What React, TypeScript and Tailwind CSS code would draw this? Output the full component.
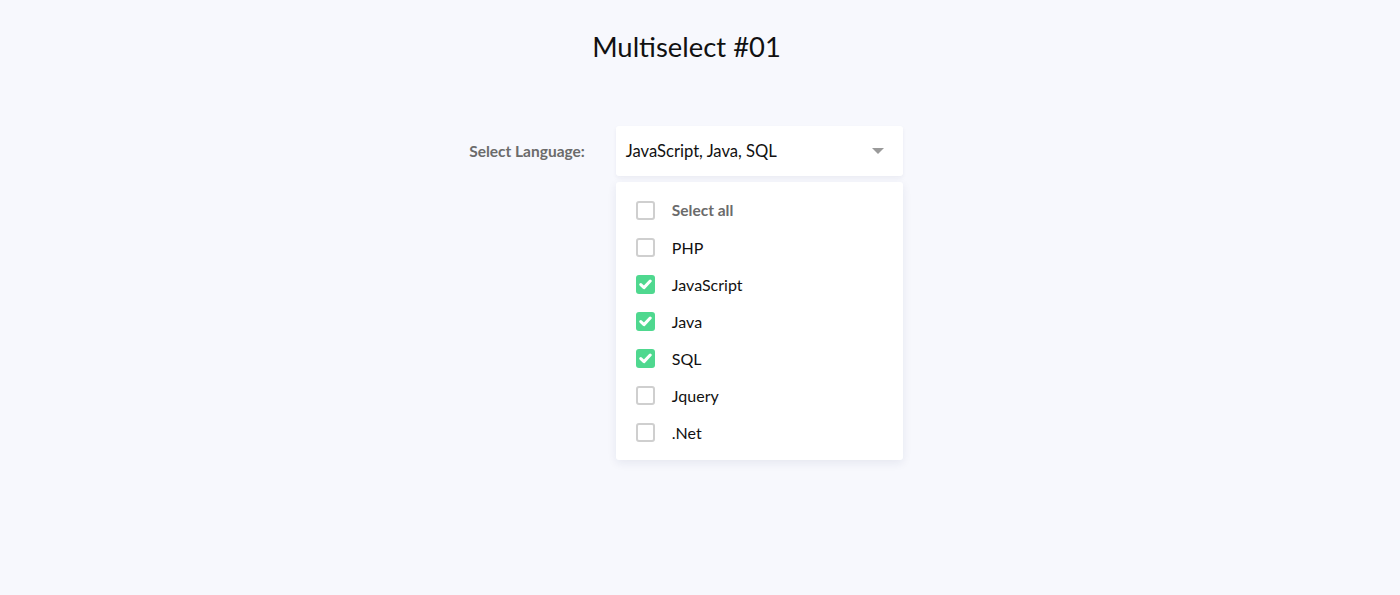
import React, { useState } from "react";

const languages = ["PHP", "JavaScript", "Java", "SQL", "Jquery", ".Net"];

const Check = ({ checked }: { checked: boolean }) =>
  checked ? (
    <span className="flex h-[19px] w-[19px] items-center justify-center rounded-[3px] bg-[#4fd88f]">
      <svg width="13" height="11" viewBox="0 0 13 11" fill="none">
        <path d="M1.8 5.6 5 8.6 11.2 2" stroke="#fff" strokeWidth="3" strokeLinecap="round" strokeLinejoin="round" />
      </svg>
    </span>
  ) : (
    <span className="block h-[19px] w-[19px] rounded-[3px] border-2 border-[#cfcfcf] bg-white" />
  );

export default function App() {
  const [selected, setSelected] = useState<string[]>(["JavaScript", "Java", "SQL"]);

  const toggle = (lang: string) =>
    setSelected((s) => (s.includes(lang) ? s.filter((x) => x !== lang) : [...s, lang]));

  return (
    <div className="min-h-[595px] bg-[#f7f8fd] pr-[27px] font-['Lato',sans-serif] text-[#111]">
      <div className="flex flex-col items-center">
        {/* Title */}
        <h1 className="mt-[30px] text-[27.4px] leading-[34px] text-[#111]">Multiselect #01</h1>

        {/* Form row */}
        <div className="mt-[62px] ml-[-1px] flex items-start gap-[31px]">
          <label className="mt-[16px] text-[15.5px] font-bold leading-[18px] text-[#6b6b6b]">
            Select Language:
          </label>
          <div className="w-[287px]">
            <div className="flex h-[50px] items-center justify-between rounded-[3px] bg-white pl-[10px] pr-[19px] shadow-[0_2px_4px_rgba(30,40,90,0.06)]">
              <span className="text-[16.6px]">{languages.filter((l) => selected.includes(l)).join(", ")}</span>
              <svg width="12" height="6" viewBox="0 0 12 6">
                <path d="M0 0h12L6 6z" fill="#9a9a9a" />
              </svg>
            </div>

            {/* Dropdown */}
            <div className="mt-[6px] rounded-[3px] bg-white pt-[10px] pb-[9px] shadow-[0_3px_10px_rgba(30,40,90,0.08)]">
              <div className="flex h-[37px] items-center gap-[17px] pl-[20px]">
                <Check checked={selected.length === languages.length} />
                <span className="text-[15.5px] font-bold text-[#6b6b6b]">Select all</span>
              </div>
              {languages.map((lang) => (
                <div
                  key={lang}
                  onClick={() => toggle(lang)}
                  className="flex h-[37px] cursor-pointer items-center gap-[17px] pl-[20px]"
                >
                  <Check checked={selected.includes(lang)} />
                  <span className="text-[16px]">{lang}</span>
                </div>
              ))}
            </div>
          </div>
        </div>
      </div>
    </div>
  );
}
